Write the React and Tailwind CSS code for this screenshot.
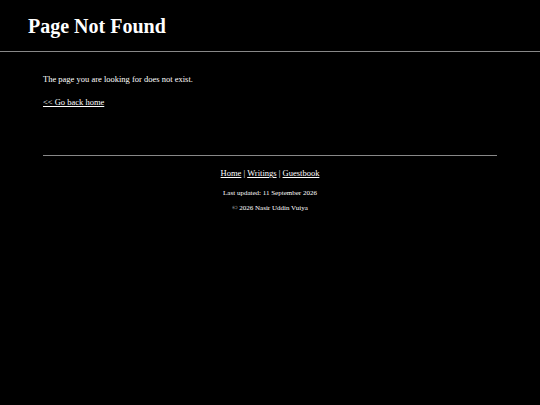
import React from 'react';

function App() {
  return (
    <div className="min-h-screen bg-black text-white" style={{ fontFamily: '"Liberation Serif", "Times New Roman", serif' }}>
      <header className="border-b border-[#888] px-[28px] pt-[13px] pb-[12px]">
        <h1 className="text-[20px] font-bold leading-[26px]">Page Not Found</h1>
      </header>

      <main className="px-[43px] pt-[21px]">
        <p className="text-[8.5px] leading-[12px]">The page you are looking for does not exist.</p>
        <p className="text-[8.5px] leading-[12px] mt-[11px]">
          <a href="#" className="underline">&lt;&lt; Go back home</a>
        </p>

        <footer className="mt-[47px] border-t border-[#888] pt-[11px] text-center">
          <nav className="text-[8.5px] leading-[12px]">
            <a href="#" className="underline">Home</a> | <a href="#" className="underline">Writings</a> | <a href="#" className="underline">Guestbook</a>
          </nav>
          <p className="text-[7px] leading-[10px] mt-[9px]">Last updated: 11 September 2026</p>
          <p className="text-[7px] leading-[10px] mt-[5px]">© 2026 Nasir Uddin Vuiya</p>
        </footer>
      </main>
    </div>
  );
}

export default App;
